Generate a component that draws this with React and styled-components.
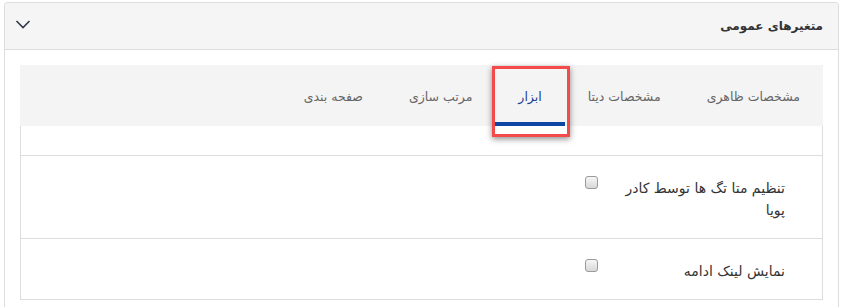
import React, { useState } from "react";
import styled, { createGlobalStyle } from "styled-components";

const GlobalStyle = createGlobalStyle`
    body {
        margin: 0;
        background: #ffffff;
        font-family: "DejaVu Sans", "Noto Sans", sans-serif;
    }
`;

const Panel = styled.div`
    margin: 2px 5px 0 4px;
    border: 1px solid #dddddd;
    border-bottom: none;
    border-radius: 4px 4px 0 0;
    height: 320px;
    direction: rtl;
    overflow: hidden;
`;

const PanelHeader = styled.div`
    height: 46px;
    background: #f5f5f5;
    border-bottom: 1px solid #dddddd;
    display: flex;
    align-items: center;
    justify-content: space-between;
    padding: 0 15px 0 10px;
`;

const PanelTitle = styled.h3`
    margin: 0;
    font-size: 12px;
    font-weight: bold;
    color: #333333;
`;

const Chevron = styled.svg`
    width: 16px;
    height: 10px;
    margin-top: -5px;
`;

const PanelBody = styled.div`
    padding: 15px 15px 0 15px;
`;

const TabBar = styled.div`
    height: 61px;
    background: #f4f4f4;
    display: flex;
`;

const Tab = styled.div`
    position: relative;
    padding: 2px 23px 0 23px;
    display: flex;
    align-items: center;
    font-size: 12.5px;
    color: ${(p) => (p.$active ? "#1d3f91" : "#666666")};
    cursor: pointer;

    &::after {
        content: "";
        display: ${(p) => (p.$active ? "block" : "none")};
        position: absolute;
        left: 0;
        right: 0;
        bottom: 0;
        height: 4px;
        background: #0d47a1;
    }
`;

const Highlight = styled.div`
    position: absolute;
    top: 1px;
    left: -3px;
    right: -5px;
    bottom: -11px;
    border: 3px solid #f44a4a;
    box-shadow: 0 2px 6px rgba(0, 0, 0, 0.45);
    pointer-events: none;
    z-index: 2;
`;

const TabContent = styled.div`
    border: 1px solid #dddddd;
    border-top: none;
`;

const Spacer = styled.div`
    height: 29px;
    border-bottom: 1px solid #dddddd;
`;

const FieldRow = styled.div`
    display: flex;
    padding: 21px 0 17px 0;
    border-bottom: ${(p) => (p.$last ? "none" : "1px solid #dddddd")};
`;

const FieldLabel = styled.label`
    width: 170px;
    padding-right: 37px;
    font-size: 14px;
    line-height: 22px;
    color: #333333;
`;

const FieldControl = styled.div`
    padding-right: 17px;
`;

const Check = styled.input.attrs({ type: "checkbox" })`
    appearance: none;
    width: 13px;
    height: 13px;
    margin: -1px 0 0 0;
    display: block;
    border: 1px solid #9a9a9a;
    border-radius: 3px;
    background: linear-gradient(#f6f6f6, #d8d8d8);
    box-sizing: border-box;

    &:checked {
        background: #0d47a1;
        border-color: #0d47a1;
    }
`;

const tabs = ["مشخصات ظاهری", "مشخصات دیتا", "ابزار", "مرتب سازی", "صفحه بندی"];

const fields = ["تنظیم متا تگ ها توسط کادر پویا", "نمایش لینک ادامه"];

export default function App() {
    const [active, setActive] = useState(2);

    return (
        <>
            <GlobalStyle />
            <Panel>
                <PanelHeader>
                    <PanelTitle>متغیرهای عمومی</PanelTitle>
                    <Chevron viewBox="0 0 16 10">
                        <path
                            d="M1.5 2 L8 8.5 L14.5 2"
                            fill="none"
                            stroke="#333a4a"
                            strokeWidth="1.6"
                        />
                    </Chevron>
                </PanelHeader>
                <PanelBody>
                    <TabBar>
                        {tabs.map((t, i) => (
                            <Tab key={t} $active={i === active} onClick={() => setActive(i)}>
                                {t}
                                {i === 2 && <Highlight />}
                            </Tab>
                        ))}
                    </TabBar>
                    <TabContent>
                        <Spacer />
                        {fields.map((f, i) => (
                            <FieldRow key={f} $last={i === fields.length - 1}>
                                <FieldLabel>{f}</FieldLabel>
                                <FieldControl>
                                    <Check />
                                </FieldControl>
                            </FieldRow>
                        ))}
                    </TabContent>
                </PanelBody>
            </Panel>
        </>
    );
}
